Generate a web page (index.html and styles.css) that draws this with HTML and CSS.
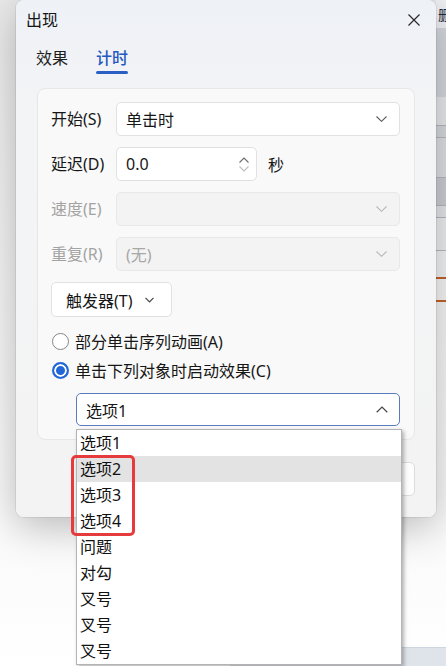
FILE: index.html
```html
<!DOCTYPE html>
<html lang="zh-CN">
<head>
<meta charset="utf-8">
<title>出现</title>
<link rel="stylesheet" href="styles.css">
</head>
<body>
<div class="screen">
  <div class="app-strip">
    <div class="band band-top"><span class="app-char">删</span></div>
    <div class="band band-a"></div>
    <div class="band band-b"></div>
    <div class="band band-c"></div>
    <div class="band band-d"></div>
    <div class="band band-e"></div>
    <div class="band band-f"></div>
    <div class="band band-g"></div>
    <div class="band band-h"></div>
    <div class="band band-i"></div>
  </div>
  <div class="statusbar"></div>

  <section class="dialog">
    <header class="titlebar">
      <h1 class="title">出现</h1>
      <span class="close">
        <svg width="12" height="12" viewBox="0 0 12 12"><path d="M0.5 0.5 L11.5 11.5 M11.5 0.5 L0.5 11.5" stroke="#2a2a2a" stroke-width="1.2" fill="none"/></svg>
      </span>
    </header>
    <nav class="tabs">
      <span class="tab">效果</span>
      <span class="tab tab-active">计时</span>
    </nav>

    <div class="panel">
      <div class="row">
        <span class="lbl">开始(S)</span>
        <div class="select">
          <span>单击时</span>
          <svg class="chev" width="11" height="6" viewBox="0 0 11 6"><path d="M0.5 0.5 L5.5 5.3 L10.5 0.5" stroke="#5a5a5a" stroke-width="1.1" fill="none"/></svg>
        </div>
      </div>
      <div class="row">
        <span class="lbl">延迟(D)</span>
        <div class="spin">
          <span>0.0</span>
          <span class="spin-arrows">
            <svg width="10" height="6" viewBox="0 0 10 6"><path d="M0.5 5.5 L5 1 L9.5 5.5" stroke="#6b6b6b" stroke-width="1.1" fill="none"/></svg>
            <svg width="10" height="6" viewBox="0 0 10 6"><path d="M0.5 0.5 L5 5 L9.5 0.5" stroke="#bdbdbd" stroke-width="1.1" fill="none"/></svg>
          </span>
        </div>
        <span class="unit">秒</span>
      </div>
      <div class="row row-disabled">
        <span class="lbl">速度(E)</span>
        <div class="select select-disabled">
          <span></span>
          <svg class="chev" width="11" height="6" viewBox="0 0 11 6"><path d="M0.5 0.5 L5.5 5.3 L10.5 0.5" stroke="#b8b8b8" stroke-width="1.1" fill="none"/></svg>
        </div>
      </div>
      <div class="row row-disabled">
        <span class="lbl">重复(R)</span>
        <div class="select select-disabled">
          <span>(无)</span>
          <svg class="chev" width="11" height="6" viewBox="0 0 11 6"><path d="M0.5 0.5 L5.5 5.3 L10.5 0.5" stroke="#b8b8b8" stroke-width="1.1" fill="none"/></svg>
        </div>
      </div>
      <div class="row">
        <span class="trigger">
          <span>触发器(T)</span>
          <svg width="9" height="6" viewBox="0 0 9 6"><path d="M0.5 0.8 L4.5 4.8 L8.5 0.8" stroke="#444" stroke-width="1.2" fill="none"/></svg>
        </span>
      </div>
      <div class="radios">
        <div class="radio-row"><span class="radio"></span><span>部分单击序列动画(A)</span></div>
        <div class="radio-row"><span class="radio radio-on"></span><span>单击下列对象时启动效果(C)</span></div>
        <div class="combo">
          <span>选项1</span>
          <svg width="12" height="7" viewBox="0 0 12 7"><path d="M0.7 6.2 L6 1 L11.3 6.2" stroke="#444" stroke-width="1.2" fill="none"/></svg>
        </div>
      </div>
    </div>

    <footer class="footer">
      <span class="btn">确定</span>
      <span class="btn">取消</span>
    </footer>
  </section>

  <ul class="dropdown">
    <li>选项1</li>
    <li class="hover">选项2</li>
    <li>选项3</li>
    <li>选项4</li>
    <li>问题</li>
    <li>对勾</li>
    <li>叉号</li>
    <li>叉号</li>
    <li>叉号</li>
  </ul>
  <div class="annot"></div>
</div>
</body>
</html>
```

FILE: styles.css
```css
html, body {
  margin: 0;
  padding: 0;
}

body {
  font-family: "Noto Sans", "Noto Sans CJK SC", sans-serif;
  color: #161616;
  background: #f6f6f6;
}

.screen {
  position: relative;
  width: 446px;
  height: 666px;
  overflow: hidden;
  background: linear-gradient(#e9e9e9, #f4f4f4 300px, #fbfbfb 560px, #ffffff);
}

/* background application strip at the right edge */
.app-strip {
  position: absolute;
  top: 0;
  right: 0;
  width: 10px;
  display: flex;
  flex-direction: column;
}

.band { flex: none; }
.band-top { height: 28px; background: #eef0f4; overflow: hidden; }
.app-char {
  display: block;
  margin: 6px 0 0 2px;
  font-family: "Noto Sans CJK SC", sans-serif;
  font-size: 14px;
  line-height: 16px;
  color: #1e2a4a;
}
.band-a { height: 69px; background: #d3d7dd; }
.band-b { height: 28px; background: #e6e8eb; border-bottom: 1px solid #b3b8bf; }
.band-c { height: 11px; background: #d5d8dd; border-bottom: 1px solid #b3b8bf; }
.band-d { height: 39px; background: #dcdfe3; border-bottom: 1px solid #b3b8bf; }
.band-e { height: 27px; background: #cacdd3; border-bottom: 1px solid #b3b8bf; }
.band-f { height: 11px; background: #e3e5e8; border-bottom: 1px solid #b3b8bf; }
.band-g { height: 32px; background: #eceef0; border-bottom: 1px solid #b3b8bf; }
.band-h { height: 26px; background: #f2f3f5; border-bottom: 2px solid #c4622a; }
.band-i { height: 21px; background: #f5f5f5; border-bottom: 2px solid #c4622a; }

.statusbar {
  position: absolute;
  left: 230px;
  right: 0;
  bottom: 0;
  height: 18px;
  background: #dfe4eb;
  border-top: 1px solid #cfd5de;
}

/* dialog window */
.dialog {
  position: absolute;
  left: 16px;
  top: 0;
  width: 420px;
  height: 517px;
  box-sizing: border-box;
  border-radius: 8px;
  background: linear-gradient(#eef1f6, #f3f4f6 110px, #f3f3f3);
  box-shadow: 0 10px 40px rgba(0, 0, 0, 0.26), 0 0 0 1px rgba(0, 0, 0, 0.07);
  display: flex;
  flex-direction: column;
}

.titlebar {
  height: 40px;
  display: flex;
  align-items: center;
  justify-content: space-between;
  padding: 0 16px 0 10px;
}

.title {
  margin: 0;
  font-size: 16px;
  font-weight: 400;
  line-height: 22px;
  color: #161616;
}

.close {
  display: flex;
  width: 12px;
  height: 12px;
}

.tabs {
  display: flex;
  gap: 28px;
  padding: 7px 0 0 20px;
}

.tab {
  display: flex;
  flex-direction: column;
  font-size: 16px;
  line-height: 22px;
  color: #1e1e1e;
}

.tab::after {
  content: "";
  height: 3px;
  margin-top: 2px;
  border-radius: 2px;
  background: transparent;
}

.tab-active {
  color: #2458c0;
  font-weight: 500;
}

.tab-active::after {
  background: #2b5fc4;
}

/* inner panel */
.panel {
  margin: 14px 21px 0 21px;
  padding: 13px 14px 13px 13px;
  border: 1px solid #e7e7e7;
  border-radius: 8px;
  background: #f9f9f9;
  display: flex;
  flex-direction: column;
  gap: 11px;
}

.row {
  display: flex;
  align-items: center;
  height: 34px;
  font-size: 16px;
}

.lbl {
  flex: none;
  width: 65px;
  line-height: 22px;
}

.select {
  flex: 1;
  height: 34px;
  box-sizing: border-box;
  border: 1px solid #e1e1e1;
  border-radius: 5px;
  background: #ffffff;
  padding: 0 12px 0 9px;
  display: flex;
  align-items: center;
  justify-content: space-between;
}

.row-disabled .lbl {
  color: #a3a3a3;
}

.select-disabled {
  background: #f3f3f3;
  border-color: #e8e8e8;
  color: #a8a8a8;
}

.spin {
  flex: none;
  width: 141px;
  height: 34px;
  box-sizing: border-box;
  border: 1px solid #e1e1e1;
  border-radius: 5px;
  background: #ffffff;
  padding: 0 7px 0 9px;
  display: flex;
  align-items: center;
  justify-content: space-between;
}

.spin-arrows {
  display: flex;
  flex-direction: column;
  gap: 3px;
}

.spin-arrows svg { display: block; }

.unit {
  margin-left: 11px;
}

.trigger {
  height: 35px;
  width: 121px;
  box-sizing: border-box;
  border: 1px solid #e1e1e1;
  border-radius: 5px;
  background: #ffffff;
  padding: 0 0 0 14px;
  display: flex;
  align-items: center;
  gap: 12px;
  margin-top: 1px;
}

.radios {
  display: flex;
  flex-direction: column;
  gap: 1px;
  font-size: 16px;
}

.radio-row {
  height: 28px;
  display: flex;
  align-items: center;
  gap: 6px;
  padding-left: 1px;
}

.radio {
  flex: none;
  width: 17px;
  height: 17px;
  box-sizing: border-box;
  border-radius: 50%;
  border: 1px solid #868686;
  background: #ffffff;
}

.radio-on {
  border: 2px solid #2366d8;
  background: #2366d8;
  box-shadow: inset 0 0 0 2px #ffffff;
}

.combo {
  margin: 8px 0 0 25px;
  height: 33px;
  box-sizing: border-box;
  border: 1px solid #5a7cbe;
  border-radius: 5px;
  background: #ffffff;
  padding: 0 11px 0 9px;
  display: flex;
  align-items: center;
  justify-content: space-between;
}

.footer {
  margin-top: 22px;
  padding-right: 21px;
  display: flex;
  justify-content: flex-end;
  gap: 8px;
}

.btn {
  width: 75px;
  height: 34px;
  box-sizing: border-box;
  border: 1px solid #dddddd;
  border-radius: 5px;
  background: #fdfdfd;
  font-size: 16px;
  display: flex;
  align-items: center;
  justify-content: center;
}

/* open dropdown list */
.dropdown {
  position: absolute;
  left: 76px;
  top: 429px;
  width: 326px;
  height: 236px;
  box-sizing: border-box;
  margin: 0;
  padding: 0;
  list-style: none;
  background: #ffffff;
  border: 1px solid #b4b4b4;
  box-shadow: 2px 2px 4px rgba(0, 0, 0, 0.3);
  font-size: 16px;
  color: #111111;
}

.dropdown li {
  height: 26px;
  line-height: 26px;
  padding-left: 3px;
}

.dropdown .hover {
  background: #e3e3e3;
}

/* red highlight annotation */
.annot {
  position: absolute;
  left: 71px;
  top: 455px;
  width: 64px;
  height: 81px;
  box-sizing: border-box;
  border: 3px solid #e53b3d;
  border-radius: 5px;
}
```
